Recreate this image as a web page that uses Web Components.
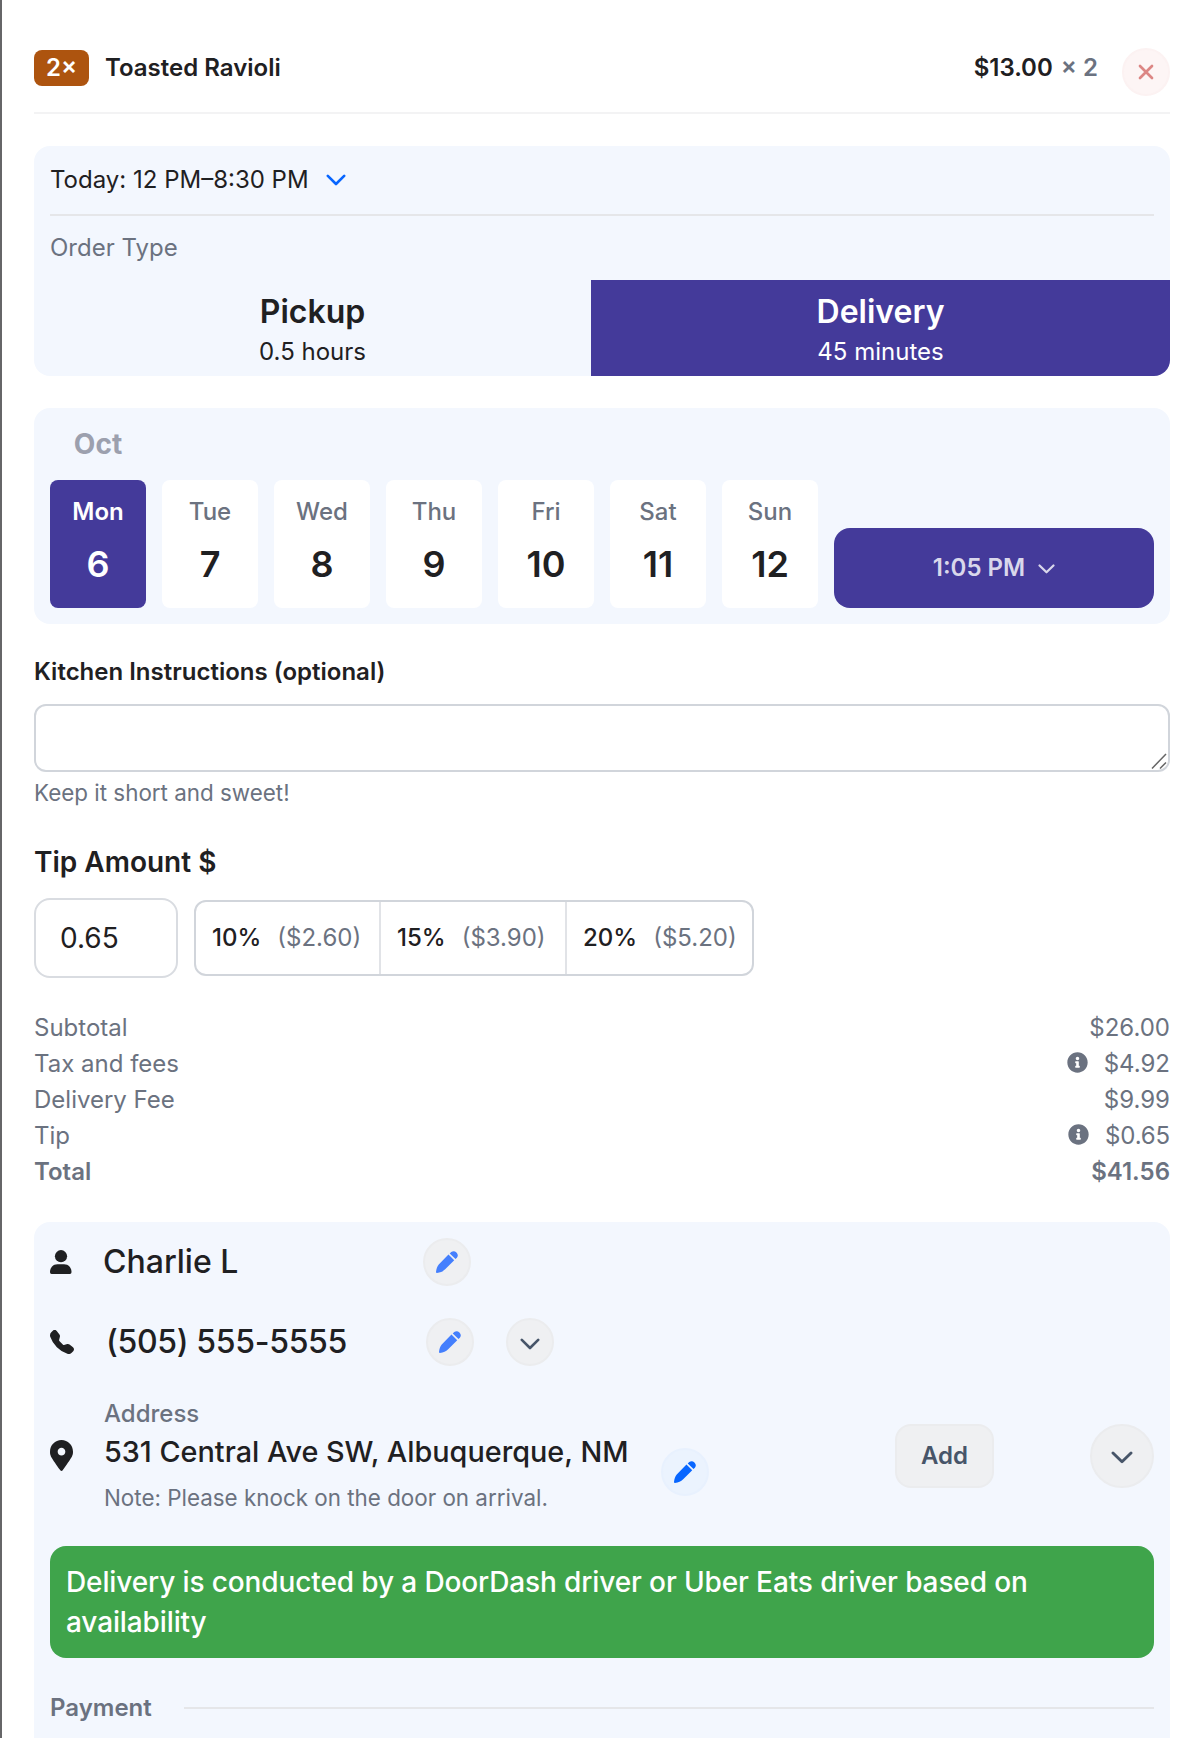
<!DOCTYPE html>
<html lang="en">
<head>
<meta charset="utf-8">
<title>Checkout</title>
<style>
html,body{margin:0;padding:0;background:#fff}
body{font-family:Inter,"Liberation Sans",sans-serif;font-size:24px;line-height:36px;color:#1f2022;overflow:hidden;height:1738px}
</style>
</head>
<body>
<checkout-page></checkout-page>
<script>
const ICONS = {
  down: ['0 0 20 12', '<path d="M1.8 1.8 10 10l8.2-8.2" fill="none" stroke="currentColor" stroke-width="2.6" stroke-linecap="round" stroke-linejoin="round"/>'],
  close: ['0 0 16 16', '<path d="M2 2l12 12M14 2L2 14" fill="none" stroke="currentColor" stroke-width="2.700" stroke-linecap="round"/>'],
  info: ['0 0 512 512', '<path fill="currentColor" d="M256 8C119 8 8 119.100 8 256c0 137 111 248 248 248s248-111 248-248C504 119.100 393 8 256 8zm0 110c23.200 0 42 18.800 42 42s-18.800 42-42 42-42-18.800-42-42 18.800-42 42-42zm56 254c0 6.600-5.400 12-12 12h-88c-6.600 0-12-5.400-12-12v-24c0-6.600 5.400-12 12-12h12v-64h-12c-6.600 0-12-5.400-12-12v-24c0-6.600 5.400-12 12-12h64c6.600 0 12 5.400 12 12v100h12c6.600 0 12 5.400 12 12v24z"/>'],
  user: ['0 0 22 24', '<circle cx="11" cy="6.200" r="6.100" fill="currentColor"/><path fill="currentColor" d="M7.500 14.200h6.500c4.500 0 7.500 3.400 7.500 7.800 0 1.200-.6 2-1.600 2H1.600C.6 24 0 23.200 0 22c0-4.400 3-7.800 7.500-7.800z"/>'],
  phone: ['0 0 16 16', '<path fill="currentColor" d="M1.885.511a1.745 1.745 0 0 1 2.610.163L6.290 2.980c.329.423.445.974.315 1.494l-.547 2.190a.678.678 0 0 0 .178.643l2.457 2.457a.678.678 0 0 0 .644.178l2.189-.547a1.745 1.745 0 0 1 1.494.315l2.306 1.794c.829.645.905 1.870.163 2.611l-1.034 1.034c-.740.740-1.846 1.065-2.877.702a18.634 18.634 0 0 1-7.010-4.420 18.634 18.634 0 0 1-4.420-7.009c-.362-1.030-.037-2.137.703-2.877L1.885.511z"/>'],
  pin: ['0 0 384 512', '<path fill="currentColor" d="M172.268 501.670C26.970 291.031 0 269.413 0 192 0 85.961 85.961 0 192 0s192 85.961 192 192c0 77.413-26.970 99.031-172.268 309.670-9.535 13.774-29.930 13.773-39.464 0zM192 256c35.346 0 64-28.654 64-64s-28.654-64-64-64-64 28.654-64 64 28.654 64 64 64z"/>'],
  pencil: ['0 0 24 24', '<path fill="currentColor" d="M13.600 3.800 19.900 10 10 20C7.500 22.400 5 23.500 1 24Q0 24 0 23C.4 19.500 1.300 16.500 3 14.700zM15 2.600 16.600 1.100Q19.500-1 22.300 1.500 25 4.500 22.800 7.300L21.300 8.800z"/>']
};
const define = (name, css, html) => {
  const t = document.createElement('template');
  customElements.define(name, class extends HTMLElement {
    constructor() {
      super();
      t.innerHTML = '<style>*{box-sizing:border-box}:host{box-sizing:border-box;display:block}' + css + '</style>' +
        (typeof html === 'function' ? html(this) : html);
      this.attachShadow({mode: 'open'}).appendChild(t.content.cloneNode(true));
    }
  });
};

define('ui-icon', ':host{display:block;flex:none}svg{display:block;width:100%;height:100%}', el => {
  const [box, body] = ICONS[el.getAttribute('name')];
  return `<svg viewBox="${box}" preserveAspectRatio="none" aria-hidden="true">${body}</svg>`;
});

define('round-button', `:host{width:48px;height:48px;flex:none;color:#3b82f6}
 button{display:flex;align-items:center;justify-content:center;width:100%;height:100%;padding:0;margin:0;border:2px solid #ebecee;border-radius:50%;background:#eff0f2;color:inherit}
 :host([tone=red]) button{background:#fdf5f5;border-color:#fcf2f2;color:#dc8684}
 :host([tone=blue]) button{background:#ebf3fe;border-color:#e8f1fe;color:#0866ff}
 :host([tone=slate]) button{color:#475569}
 :host([tone=edit]) button{color:#447ffd}
 :host([size=lg]){width:64px;height:64px}`, '<button><slot></slot></button>');

define('soft-card', ':host{background:#f3f7fe;border-radius:16px;overflow:hidden}', '<slot></slot>');

define('cart-item', `:host{height:114px;padding:48px 0 0;border-bottom:2px solid #f3f3f4;display:flex;align-items:flex-start;font-weight:600}
 .q{margin-top:2px;width:55px;height:36px;border-radius:8px;background:#ad540f;color:#fff;display:flex;justify-content:center;line-height:35px}
 .n{margin:2px 0 0 16px;flex:1}.p{margin:2px 24px 0 0}.p span{color:#6b7280;margin-left:2px}`,
 `<div class="q"><span>2×</span></div><div class="n">Toasted Ravioli</div><div class="p">$13.00 <span>× 2</span></div>
 <round-button tone="red"><ui-icon name="close" style="width:16px;height:16px"></ui-icon></round-button>`);

define('order-type', `.h{margin:0 16px;height:70px;padding-top:16px;display:flex;border-bottom:2px solid #e5e6e9}
 .l{padding:13px 16px 0;height:64px;line-height:37px;color:#6b7280}
 .t{display:grid;grid-template-columns:557px 1fr;height:96px;text-align:center}
 .t b{display:block;font-size:32px;line-height:40px;font-weight:600}.t div{padding-top:12px;line-height:40px}.on{background:#443a9a;color:#fff}
 ui-icon{margin:12px 0 0 17px}`,
 `<div class="h"><span>Today: 12 PM–8:30 PM</span><ui-icon name="down" style="width:20px;height:12px;color:#0866ff"></ui-icon></div>
 <div class="l">Order Type</div>
 <div class="t"><div><b>Pickup</b>0.5 hours</div><div class="on"><b>Delivery</b>45 minutes</div></div>`);

define('day-tile', `:host{width:96px;height:128px;border-radius:8px;background:#fff;text-align:center;padding-top:14px;color:#6b7280;font-weight:500}
 .n{font-size:36px;line-height:44px;margin-top:12px;font-weight:600;color:#1f2022}
 :host([on]){background:#443a9a;color:#fff;font-weight:600}:host([on]) .n{color:#fff}`, '<slot></slot><div class="n"><slot name="date"></slot></div>');

define('day-picker', `:host{padding:16px;height:216px}.m{width:96px;text-align:center;font-size:28px;line-height:40px;height:56px;font-weight:700;color:#9ca0ae}
 .r{display:flex;gap:16px;align-items:flex-end}
 button{flex:1;height:80px;border:0;border-radius:16px;background:#443a9a;color:#d9d7eb;font:600 24px/36px Inter,sans-serif;display:flex;align-items:center;justify-content:center;gap:13px;padding:0 0 1px}`,
 `<div class="m">Oct</div><div class="r"><day-tile on>Mon<span slot="date">6</span></day-tile><day-tile>Tue<span slot="date">7</span></day-tile><day-tile>Wed<span slot="date">8</span></day-tile><day-tile>Thu<span slot="date">9</span></day-tile><day-tile>Fri<span slot="date">10</span></day-tile><day-tile>Sat<span slot="date">11</span></day-tile><day-tile>Sun<span slot="date">12</span></day-tile>
 <button><span>1:05 PM</span><ui-icon name="down" style="width:17px;height:10px;margin-top:3px"></ui-icon></button></div>`);

define('kitchen-notes', `label{display:block;font-weight:600;line-height:36px}
 .b{height:68px;margin-top:14px;border:2px solid #d1d5db;border-radius:12px;background:#fff;display:flex;justify-content:flex-end;align-items:flex-end;padding:0 1px 1px}
 .k{font-size:22.4px;line-height:32px;margin-top:5px;color:#6b7280}svg{display:block}`,
 `<label>Kitchen Instructions (optional)</label><div class="b"><svg width="16" height="16" viewBox="0 0 16 16"><path d="M1 15.500 15 1M9 15.500l6-6" stroke="#666" stroke-width="1.500" fill="none"/></svg></div><div class="k">Keep it short and sweet!</div>`);

define('tip-picker', `h3{margin:0;font-size:28px;line-height:40px;font-weight:600}
 .r{display:flex;gap:16px;align-items:center;margin-top:16px}
 .i{width:144px;height:80px;border:2px solid #d9dce1;border-radius:16px;font-size:28px;line-height:76px;padding-left:24px}
 .g{width:560px;height:76px;border:2px solid #d1d5db;border-radius:12px;display:grid;grid-template-columns:185px 186px 1fr;line-height:72px}
 .g div{padding-left:16px;display:flex;gap:16px;border-right:2px solid #e1e3e7;font-weight:500}.g div:last-child{border:0}.g span{color:#6b7280;font-weight:400}`,
 `<h3>Tip Amount $</h3><div class="r"><div class="i">0.65</div><div class="g"><div>10% <span>($2.60)</span></div><div>15% <span>($3.90)</span></div><div>20% <span>($5.20)</span></div></div></div>`);

define('total-row', `:host{display:flex;justify-content:space-between;height:36px;line-height:35px;color:#6b7280}
 :host([bold]){font-weight:600}div{display:flex;gap:16px}ui-icon{width:21px;height:21px;margin-top:6px}`,
 el => `<slot></slot><div>${el.hasAttribute('info') ? '<ui-icon name="info"></ui-icon>' : ''}<slot name="amount"></slot></div>`);

define('contact-row', `:host{display:flex;align-items:center;height:48px;font-size:32px;font-weight:500}
 .i{width:var(--lead,53px);flex:none}.t{width:var(--span,320px);flex:none;line-height:48px;letter-spacing:var(--track,0)}.a{display:flex;gap:32px}`,
 '<div class="i"><slot name="icon"></slot></div><div class="t"><slot></slot></div><div class="a"><slot name="actions"></slot></div>');

define('address-row', `:host{display:flex;height:112px;align-items:flex-start}
 .i{width:54px;padding-top:44px}.l{color:#6b7280;font-weight:500;line-height:34px;margin-top:1px}.v{font-size:28.8px;font-weight:500;line-height:42px}.n{font-size:22.4px;line-height:32px;color:#6b7280;margin-top:9px}
 .t{width:557px;white-space:nowrap}
 .e{margin-top:52px}.add{margin:28px 0 0 186px;width:99px;height:64px;border:2px solid #ebecee;border-radius:16px;background:#eff0f2;color:#475569;font:600 24px/36px Inter,sans-serif;padding:0}
 .d{margin:28px 0 0 auto}`,
 `<div class="i"><ui-icon name="pin" style="width:23px;height:31px"></ui-icon></div>
 <div class="t"><div class="l">Address</div><div class="v">531 Central Ave SW, Albuquerque, NM</div><div class="n">Note: Please knock on the door on arrival.</div></div>
 <round-button class="e" tone="blue"><ui-icon name="pencil" style="width:22px;height:22px"></ui-icon></round-button>
 <button class="add">Add</button>
 <round-button class="d" tone="slate" size="lg"><ui-icon name="down" style="width:22px;height:13px;margin-top:3px"></ui-icon></round-button>`);

define('notice-box', ':host{background:#3fa44b;color:#fff;border-radius:16px;height:112px;padding:16px;font-size:28px;line-height:40px;font-weight:500;letter-spacing:-.12px}', '<slot></slot>');
define('section-title', ':host{display:flex;align-items:center;gap:32px;color:#6b7280;font-weight:600;line-height:36px}i{flex:1;height:2px;background:#e5e6e9}', '<slot></slot><i></i>');

define('checkout-page', `:host{height:1738px;border-left:2px solid #666668;padding:0 16px 0 32px;overflow:hidden}`,
 `<cart-item></cart-item>
 <soft-card style="margin-top:32px;height:230px"><order-type></order-type></soft-card>
 <soft-card style="margin-top:32px"><day-picker></day-picker></soft-card>
 <kitchen-notes style="margin-top:30px"></kitchen-notes>
 <tip-picker style="margin-top:33px"></tip-picker>
 <div style="margin-top:32px">
 <total-row>Subtotal<span slot="amount">$26.00</span></total-row>
 <total-row info>Tax and fees<span slot="amount">$4.92</span></total-row>
 <total-row>Delivery Fee<span slot="amount">$9.99</span></total-row>
 <total-row info>Tip<span slot="amount" style="letter-spacing:-.15px">$0.65</span></total-row>
 <total-row bold>Total<span slot="amount">$41.56</span></total-row></div>
 <soft-card style="margin-top:32px;height:560px;padding:16px">
 <contact-row><ui-icon slot="icon" name="user" style="width:22px;height:24px"></ui-icon>Charlie L<round-button slot="actions" tone="edit"><ui-icon name="pencil" style="width:22px;height:22px"></ui-icon></round-button></contact-row>
 <contact-row style="margin-top:32px;--lead:56px;--track:-.33px"><ui-icon slot="icon" name="phone" style="width:24px;height:24px"></ui-icon>(505) 555-5555<round-button slot="actions" tone="edit"><ui-icon name="pencil" style="width:22px;height:22px"></ui-icon></round-button><round-button slot="actions" tone="slate"><ui-icon name="down" style="width:20px;height:12px;margin-top:3px"></ui-icon></round-button></contact-row>
 <address-row style="margin-top:30px"></address-row>
 <notice-box style="margin-top:38px">Delivery is conducted by a DoorDash driver or Uber Eats driver based on availability</notice-box>
 <section-title style="margin-top:32px">Payment</section-title>
 </soft-card>`);
</script>
</body>
</html>
